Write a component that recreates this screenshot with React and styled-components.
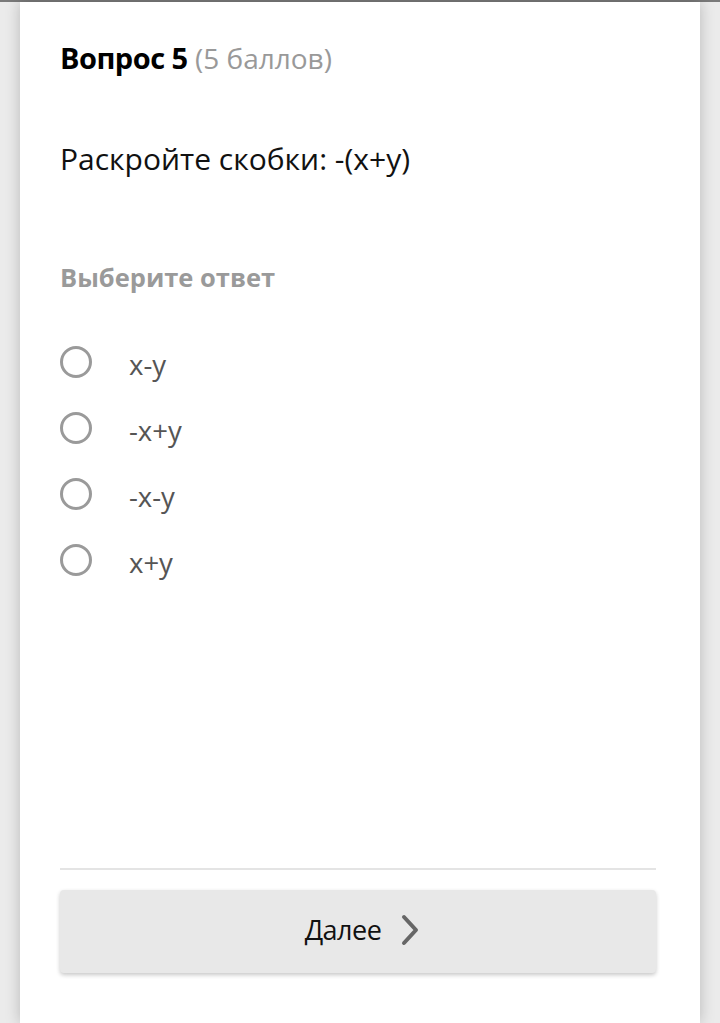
import React, { useState } from 'react';
import styled, { createGlobalStyle } from 'styled-components';

const GlobalStyle = createGlobalStyle`
  html, body {
    margin: 0;
    padding: 0;
    background: #ebebeb;
    font-family: "Open Sans", "Noto Sans", sans-serif;
  }
`;

const Page = styled.div`
  min-height: 1023px;
  border-top: 2px solid #7a7a7a;
  box-sizing: border-box;
  display: flex;
  justify-content: center;
  background: #ebebeb;
`;

const Card = styled.div`
  width: 680px;
  min-height: 1021px;
  background: #fff;
  box-shadow: 0 0 14px rgba(0, 0, 0, 0.22);
  box-sizing: border-box;
  padding: 38px 44px 0 40px;
  display: flex;
  flex-direction: column;
`;

const Heading = styled.div`
  font-size: 28px;
  line-height: 36px;
  color: #000;
`;

const Strong = styled.span`
  font-weight: 700;
  font-size: 29px;
  letter-spacing: -0.5px;
`;

const Points = styled.span`
  color: #999;
`;

const Question = styled.div`
  margin-top: 64px;
  font-size: 30px;
  line-height: 38px;
  color: #111;
`;

const Hint = styled.div`
  margin-top: 83px;
  font-size: 25.5px;
  font-weight: 700;
  line-height: 32px;
  color: #9a9a9a;
`;

const Options = styled.div`
  margin-top: 53px;
  display: flex;
  flex-direction: column;
  gap: 34px;
  flex: 1;
`;

const Option = styled.label`
  display: flex;
  align-items: center;
  gap: 37px;
  cursor: pointer;
  height: 32px;
`;

const Radio = styled.span`
  width: 32px;
  height: 32px;
  box-sizing: border-box;
  border: 3px solid #9a9a9a;
  border-radius: 50%;
  display: flex;
  align-items: center;
  justify-content: center;

  &::after {
    content: '';
    width: 16px;
    height: 16px;
    border-radius: 50%;
    background: ${p => (p.$checked ? '#9a9a9a' : 'transparent')};
  }
`;

const OptionText = styled.span`
  font-size: 27.5px;
  line-height: 36px;
  color: #555;
  margin-top: 6px;
`;

const Footer = styled.div`
  border-top: 2px solid #e4e4e4;
  padding-top: 20px;
  padding-bottom: 50px;
`;

const NextButton = styled.button`
  width: 100%;
  height: 83px;
  border: none;
  border-radius: 4px;
  background: #e8e8e8;
  box-shadow: 0 2px 4px rgba(0, 0, 0, 0.22);
  display: flex;
  align-items: center;
  justify-content: center;
  gap: 20px;
  font-family: "Open Sans", "Noto Sans", sans-serif;
  font-size: 27px;
  color: #111;
  letter-spacing: -0.5px;
  cursor: pointer;
  padding: 0 0 4px 8px;
`;

const options = ['x-y', '-x+y', '-x-y', 'x+y'];

const App = () => {
  const [selected, setSelected] = useState(null);

  return (
    <>
      <GlobalStyle />
      <Page>
        <Card>
          <Heading>
            <Strong>Вопрос 5</Strong> <Points>(5 баллов)</Points>
          </Heading>
          <Question>Раскройте скобки: -(x+y)</Question>
          <Hint>Выберите ответ</Hint>
          <Options>
            {options.map((o, i) => (
              <Option key={o} onClick={() => setSelected(i)}>
                <Radio $checked={selected === i} />
                <OptionText>{o}</OptionText>
              </Option>
            ))}
          </Options>
          <Footer>
            <NextButton>
              Далее
              <svg width="18" height="32" viewBox="0 0 18 32">
                <path d="M3 3 L15 16 L3 29" fill="none" stroke="#666" strokeWidth="4" strokeLinecap="round" strokeLinejoin="round" />
              </svg>
            </NextButton>
          </Footer>
        </Card>
      </Page>
    </>
  );
};

export default App;
